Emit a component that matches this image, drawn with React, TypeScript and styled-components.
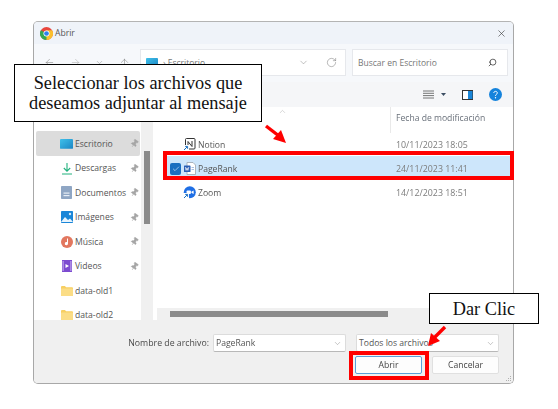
import React from "react";
import styled, { createGlobalStyle } from "styled-components";
import { ArrowLeft, ArrowRight, ChevronDown, ChevronUp, ArrowUp, RotateCw, X, Search, Pin, Check } from "lucide-react";

const Global = createGlobalStyle`
  html, body { margin: 0; padding: 0; background: #fff; }
  body { width: 558px; height: 409px; overflow: hidden; font-family: "Open Sans", "Noto Sans", sans-serif; }
`;
const Page = styled.div`position: relative; width: 558px; height: 409px; padding: 21px 0 0 33px; box-sizing: border-box; overflow: hidden;`;
const Win = styled.div`
  position: relative; width: 481px; height: 363px; box-sizing: border-box; display: flex; flex-direction: column; overflow: hidden;
  background: #fff; border: 1px solid #a8a8a8; border-top-color: #b4b4b4; border-radius: 5px; color: #4a4a4a;
  filter: blur(0.25px);
`;
const TitleBar = styled.div`height: 22px; flex: none; background: #eff3f9; display: flex; align-items: center; padding: 0 6px; gap: 2px; font-size: 8.6px; color: #555;`;
const TitleText = styled.span`flex: 1;`;
const NavBar = styled.div`height: 38px; flex: none; background: #f6f8fb; box-sizing: border-box; padding: 5px 6px 6px 0; display: flex; align-items: stretch; color: #777;`;
const NavButtons = styled.div`width: 106px; flex: none; display: flex; align-items: center; padding-left: 10px; box-sizing: border-box; gap: 14.5px;`;
const Field = styled.div<{ $w: number }>`width: ${p => p.$w}px; flex: none; box-sizing: border-box; background: #fff; border: 1px solid #e6e8ec; display: flex; align-items: center; font-size: 8.5px; color: #777; padding: 0 7px 0 5px;`;
const Crumb = styled.span`flex: 1; margin-left: 5px;`;
const Placeholder = styled.span`flex: 1;`;
const RefreshSlot = styled.span`margin: 0 1px 0 17px; display: flex;`;
const SearchSlot = styled.span`margin-right: 3px; display: flex; transform: scaleX(-1); color: #333;`;
const Gap = styled.div`width: 6px; flex: none;`;
const ToolBar = styled.div`height: 25px; flex: none; background: #f5f6f8; display: flex; align-items: center; justify-content: flex-end; padding-right: 11px; box-sizing: border-box;`;
const Body = styled.div`flex: 1; min-height: 0; display: flex;`;
const Side = styled.div`width: 107px; flex: none; padding: 24px 0 0 2px; box-sizing: border-box; overflow: hidden; display: flex; flex-direction: column;`;
const SideRow = styled.div<{ $on?: boolean }>`
  height: 24.5px; flex: none; width: 104px; box-sizing: border-box; display: flex; align-items: center; padding: 1px 0 0 24px;
  font-size: 8.6px; color: #555; background: ${p => (p.$on ? "#dcdcdc" : "transparent")}; border-radius: 2px;
`;
const SideLabel = styled.span`flex: 1; white-space: nowrap;`;
const PinSlot = styled.span`display: flex; margin-right: 1px; color: #a6a6a6;`;
const VTrack = styled.div`width: 12px; flex: none; background: #f0f0f0; padding: 44px 3px 0; box-sizing: border-box;`;
const VThumb = styled.div`height: 73px; background: #8b8b8b;`;
const Main = styled.div`flex: 1; min-width: 0; display: flex; flex-direction: column;`;
const Header = styled.div`height: 25px; flex: none; display: flex; box-sizing: border-box;`;
const HeadName = styled.div`width: 237px; flex: none; display: flex; justify-content: flex-end; padding-right: 103px; box-sizing: border-box; color: #aaa;`;
const HeadDate = styled.div`height: 21px; border-left: 1px solid #e9e9e9; padding: 5px 0 0 5px; font-size: 8.6px; color: #69707a;`;
const Rows = styled.div`flex: 1; min-height: 0; padding-left: 14px;`;
const FileRow = styled.div<{ $on?: boolean }>`
  height: 24px; display: flex; align-items: center; box-sizing: border-box; padding: 1px 0 0 3px; width: 343px;
  background: ${p => (p.$on ? "#cde6fb" : "transparent")}; font-size: 8.6px; color: #555;
`;
const Check1 = styled.span<{ $on?: boolean }>`width: 11px; height: 12px; margin-right: 2px; border-radius: 2px; flex: none; display: flex; align-items: center; justify-content: center; background: ${p => (p.$on ? "#1a6fc0" : "transparent")}; color: #cfe6fb;`;
const IconSlot = styled.span`width: 13px; flex: none; display: flex; justify-content: center; margin-right: 2px;`;
const FileName = styled.span`width: 198px; flex: none;`;
const DateText = styled.span`color: #7c7c7c; font-size: 8.85px;`;
const HTrack = styled.div`height: 12px; flex: none; margin-left: 4px; background: #f0f0f0; padding: 3px 0 0 13px; box-sizing: border-box;`;
const HThumb = styled.div`height: 6px; width: 218px; background: #8b8b8b;`;
const Footer = styled.div`height: 63px; flex: none; background: #f0f0f0; padding: 14px 14px 0 0; box-sizing: border-box; display: flex; flex-direction: column; gap: 4px;`;
const FootRow = styled.div`display: flex; justify-content: flex-end; align-items: center;`;
const FootLabel = styled.span`font-size: 8.75px; color: #4a4a4a; margin-right: 4px;`;
const Combo = styled.div<{ $w: number }>`width: ${p => p.$w}px; height: 18px; box-sizing: border-box; background: #fff; border: 1px solid #dcdcdc; border-bottom-color: #b8b8b8; border-radius: 2px; display: flex; align-items: center; justify-content: space-between; padding: 0 3px 0 2px; font-size: 8.6px; color: #555; margin-left: ${p => (p.$w > 140 ? 10 : 0)}px;`;
const Btn = styled.div<{ $primary?: boolean }>`width: 67px; height: 18px; margin-left: 10px; box-sizing: border-box; background: #fdfdfd; border: 1px solid ${p => (p.$primary ? "#5a9fd8" : "#e0e0e0")}; border-radius: 2px; display: flex; align-items: center; justify-content: center; font-size: 8.6px; color: #444;`;
const Grip = styled.svg`position: absolute; right: 1px; bottom: 1px;`;

const Callout = styled.div<{ $x: number; $y: number; $w: number; $h: number }>`
  position: absolute; left: ${p => p.$x}px; top: ${p => p.$y}px; width: ${p => p.$w}px; height: ${p => p.$h}px; box-sizing: border-box;
  background: #fff; border: 1px solid #000; font-family: "Liberation Serif", serif; font-size: 18.3px; line-height: 20px; color: #111;
  display: flex; align-items: center; justify-content: center; text-align: center; white-space: nowrap;
`;
const RedBox = styled.div<{ $x: number; $y: number; $w: number; $h: number }>`
  position: absolute; left: ${p => p.$x}px; top: ${p => p.$y}px; width: ${p => p.$w}px; height: ${p => p.$h}px; box-sizing: border-box; border: 4.5px solid #f00;
`;
const ArrowSvg = styled.svg<{ $x: number; $y: number }>`position: absolute; left: ${p => p.$x}px; top: ${p => p.$y}px;`;

const Chrome = () => (
  <svg width="13" height="13" viewBox="0 0 24 24">
    <circle cx="12" cy="12" r="12" fill="#e8453c" />
    <path d="M12 12 L1.6 6 A12 12 0 0 0 12 24 L18 13.5 Z" fill="#34a853" />
    <path d="M12 24 A12 12 0 0 0 22.4 6 L12 6 L12 12 Z" fill="#fbc02d" />
    <circle cx="12" cy="12" r="5.6" fill="#fff" />
    <circle cx="12" cy="12" r="4.3" fill="#2f80ed" />
  </svg>
);
const Desk = ({ s = 13 }: { s?: number }) => (
  <svg width={s} height={s * 0.75} viewBox="0 0 16 12"><defs><linearGradient id="dk" x1="0" x2="1" y1="0" y2="1"><stop offset="0" stopColor="#3fc0ea" /><stop offset="1" stopColor="#1b86c4" /></linearGradient></defs><rect width="16" height="12" rx="0.6" fill="url(#dk)" /></svg>
);
const Dl = () => (
  <svg width="12" height="13" viewBox="0 0 12 13" fill="none" stroke="#22b27e" strokeWidth="1.1"><path d="M6 1v8M2.8 6L6 9.2 9.2 6" /><path d="M1 12h10" /></svg>
);
const Docs = () => (
  <svg width="11" height="13" viewBox="0 0 11 13"><rect width="11" height="13" rx="0.8" fill="#8fa6c4" /><rect x="2.5" y="6.5" width="6" height="1.2" fill="#e6edf6" /><rect x="2.5" y="9" width="6" height="1.2" fill="#e6edf6" /></svg>
);
const Pics = () => (
  <svg width="12" height="12" viewBox="0 0 12 12"><rect width="12" height="12" rx="0.8" fill="#1a86d8" /><path d="M0 11l4-5 3 3 2-1.5 3 3.5H0z" fill="#e8f4fd" /><circle cx="9" cy="3" r="1.2" fill="#cfe8fb" /></svg>
);
const Music = () => (
  <svg width="12" height="12" viewBox="0 0 12 12"><circle cx="6" cy="6" r="6" fill="#e2775f" /><path d="M7 2.5v5a1.6 1.6 0 1 1-1-1.4V2.5z" fill="#fff" /></svg>
);
const Video = () => (
  <svg width="10" height="12" viewBox="0 0 10 12"><rect width="10" height="12" fill="#7c4bd0" /><path d="M3.5 4l3.5 2-3.5 2z" fill="#fff" /><rect x="0.6" y="1" width="1" height="10" fill="#c9b3f0" /><rect x="8.4" y="1" width="1" height="10" fill="#c9b3f0" /></svg>
);
const Folder = () => (
  <svg width="12" height="10" viewBox="0 0 12 10"><path d="M0 1a1 1 0 0 1 1-1h3l1 1.2h6a1 1 0 0 1 1 1V9a1 1 0 0 1-1 1H1a1 1 0 0 1-1-1z" fill="#f7cf62" /><rect y="2.6" width="12" height="7.4" rx="0.8" fill="#fbdd86" /></svg>
);
const Shortcut = () => (
  <g><rect x="0" y="7" width="6" height="6" fill="#fff" /><path d="M1 12l3.2-3.2M2.2 8.4h2.4v2.4" stroke="#1a6fc0" strokeWidth="1" fill="none" /></g>
);
const Notion = () => (
  <svg width="13" height="13" viewBox="0 0 13 13"><rect x="2.5" y="0.5" width="9.5" height="10.5" rx="1" fill="#fff" stroke="#333" strokeWidth="1" /><path d="M5 3.5v5M5 3.5l4 5M9 3v5.5" stroke="#333" strokeWidth="1" fill="none" /><Shortcut /></svg>
);
const Word = () => (
  <svg width="12" height="13" viewBox="0 0 12 13"><path d="M3 .5h6l2.5 2.5v9.5H3z" fill="#fff" stroke="#9aa3ad" strokeWidth="0.8" /><rect x="0" y="3.5" width="6.5" height="6.5" rx="0.6" fill="#2b5fb4" /><path d="M1.3 5l.8 3.4.9-2.6.9 2.6.9-3.4" stroke="#fff" strokeWidth="0.7" fill="none" /><path d="M7.5 5.5h2.5M7.5 7.5h2.5" stroke="#8fb0dc" strokeWidth="0.8" /></svg>
);
const Zoom = () => (
  <svg width="13" height="13" viewBox="0 0 13 13"><circle cx="6.8" cy="6.2" r="6" fill="#1f6fe5" /><rect x="3.6" y="4.4" width="4.3" height="3.6" rx="0.8" fill="#fff" /><path d="M8.4 5.8l2.2-1.3v3.4L8.4 6.7z" fill="#fff" /><Shortcut /></svg>
);
const ListIcon = () => (
  <svg width="11" height="9" viewBox="0 0 11 9" stroke="#666" strokeWidth="0.9"><path d="M0 1h11M0 3.3h11M0 5.6h11M0 8h11" /></svg>
);
const Caret = () => (<svg width="5" height="3" viewBox="0 0 5 3" style={{ margin: "0 16px 0 7px" }}><path d="M0 0h5L2.5 3z" fill="#3b4d63" /></svg>);
const PaneIcon = () => (
  <svg width="11" height="10" viewBox="0 0 11 10" style={{ marginRight: 16 }}><rect x="0.5" y="0.5" width="10" height="9" fill="#fff" stroke="#333" /><rect x="6" y="1" width="4.5" height="8" fill="#1a86d8" /></svg>
);
const Help = () => (
  <svg width="13" height="13" viewBox="0 0 13 13"><circle cx="6.5" cy="6.5" r="6.5" fill="#1583dc" /><path d="M4.8 5c0-2.2 3.5-2.2 3.5 0 0 1.4-1.8 1.3-1.8 2.8" stroke="#fff" strokeWidth="1" fill="none" /><circle cx="6.5" cy="9.8" r="0.7" fill="#fff" /></svg>
);
const Pn = () => <PinSlot><Pin size={9} fill="#a6a6a6" strokeWidth={1.5} style={{ transform: "rotate(35deg)" }} /></PinSlot>;

const RedArrow = ({ x, y, w, h, line, head }: { x: number; y: number; w: number; h: number; line: string; head: string }) => (
  <ArrowSvg $x={x} $y={y} width={w} height={h} viewBox={`0 0 ${w} ${h}`}>
    <path d={line} stroke="#f00" strokeWidth="3.4" fill="none" />
    <path d={head} fill="#f00" />
  </ArrowSvg>
);

const side: [React.ReactNode, string, boolean][] = [
  [<Desk />, "Escritorio", true],
  [<Dl />, "Descargas", true],
  [<Docs />, "Documentos", true],
  [<Pics />, "Imágenes", true],
  [<Music />, "Música", true],
  [<Video />, "Videos", true],
  [<Folder />, "data-old1", false],
  [<Folder />, "data-old2", false],
];

export default function App() {
  return (
    <Page>
      <Global />
      <Win>
        <TitleBar>
          <Chrome />
          <TitleText>Abrir</TitleText>
          <X size={11} color="#333" strokeWidth={1.3} />
        </TitleBar>
        <NavBar>
          <NavButtons>
            <ArrowLeft size={11} strokeWidth={1.1} />
            <ArrowRight size={11} strokeWidth={1.1} color="#aaa" />
            <ChevronDown size={9} strokeWidth={1.1} />
            <ArrowUp size={11} strokeWidth={1.1} />
          </NavButtons>
          <Field $w={206}>
            <Desk s={12} />
            <Crumb>› Escritorio</Crumb>
            <ChevronDown size={11} strokeWidth={1} />
            <RefreshSlot><RotateCw size={11} strokeWidth={1.1} /></RefreshSlot>
          </Field>
          <Gap />
          <Field $w={156}>
            <Placeholder>Buscar en Escritorio</Placeholder>
            <SearchSlot><Search size={9} strokeWidth={2} /></SearchSlot>
          </Field>
        </NavBar>
        <ToolBar>
          <ListIcon />
          <Caret />
          <PaneIcon />
          <Help />
        </ToolBar>
        <Body>
          <Side>
            {side.map(([icon, label, pin], i) => (
              <SideRow key={label} $on={i === 0}>
                <IconSlot>{icon}</IconSlot>
                <SideLabel>{label}</SideLabel>
                {pin && <Pn />}
              </SideRow>
            ))}
          </Side>
          <VTrack><VThumb /></VTrack>
          <Main>
            <Header>
              <HeadName><ChevronUp size={9} strokeWidth={1.2} /></HeadName>
              <HeadDate>Fecha de modificación</HeadDate>
            </Header>
            <Rows>
              <FileRow>
                <Check1 />
                <IconSlot><Notion /></IconSlot>
                <FileName>Notion</FileName>
                <DateText>10/11/2023 18:05</DateText>
              </FileRow>
              <FileRow $on>
                <Check1 $on><Check size={8} strokeWidth={2} /></Check1>
                <IconSlot><Word /></IconSlot>
                <FileName>PageRank</FileName>
                <DateText>24/11/2023 11:41</DateText>
              </FileRow>
              <FileRow>
                <Check1 />
                <IconSlot><Zoom /></IconSlot>
                <FileName>Zoom</FileName>
                <DateText>14/12/2023 18:51</DateText>
              </FileRow>
            </Rows>
            <HTrack><HThumb /></HTrack>
          </Main>
        </Body>
        <Footer>
          <FootRow>
            <FootLabel>Nombre de archivo:</FootLabel>
            <Combo $w={133}>PageRank<ChevronDown size={9} strokeWidth={1.1} color="#777" /></Combo>
            <Combo $w={143}>Todos los archivos<ChevronDown size={9} strokeWidth={1.1} color="#777" /></Combo>
          </FootRow>
          <FootRow>
            <Btn $primary>Abrir</Btn>
            <Btn>Cancelar</Btn>
          </FootRow>
        </Footer>
        <Grip width="7" height="7" viewBox="0 0 7 7" fill="#b0b0b0">
          <rect x="5" y="1" width="1" height="1" /><rect x="3" y="3" width="1" height="1" /><rect x="5" y="3" width="1" height="1" />
          <rect x="1" y="5" width="1" height="1" /><rect x="3" y="5" width="1" height="1" /><rect x="5" y="5" width="1" height="1" />
        </Grip>
      </Win>
      <Callout $x={14} $y={64} $w={248} $h={58}>Seleccionar los archivos que<br />deseamos adjuntar al mensaje</Callout>
      <Callout $x={429} $y={293} $w={110} $h={31}>Dar Clic</Callout>
      <RedBox $x={163} $y={151} $w={351} $h={29} />
      <RedBox $x={349} $y={351} $w={80} $h={29} />
      <RedArrow x={262} y={122} w={28} h={24} line="M4 4L17 14" head="M24 21L11 17L19 8Z" />
      <RedArrow x={424} y={324} w={26} h={26} line="M21 3L10 14" head="M4 22L7 9L16 17Z" />
    </Page>
  );
}
